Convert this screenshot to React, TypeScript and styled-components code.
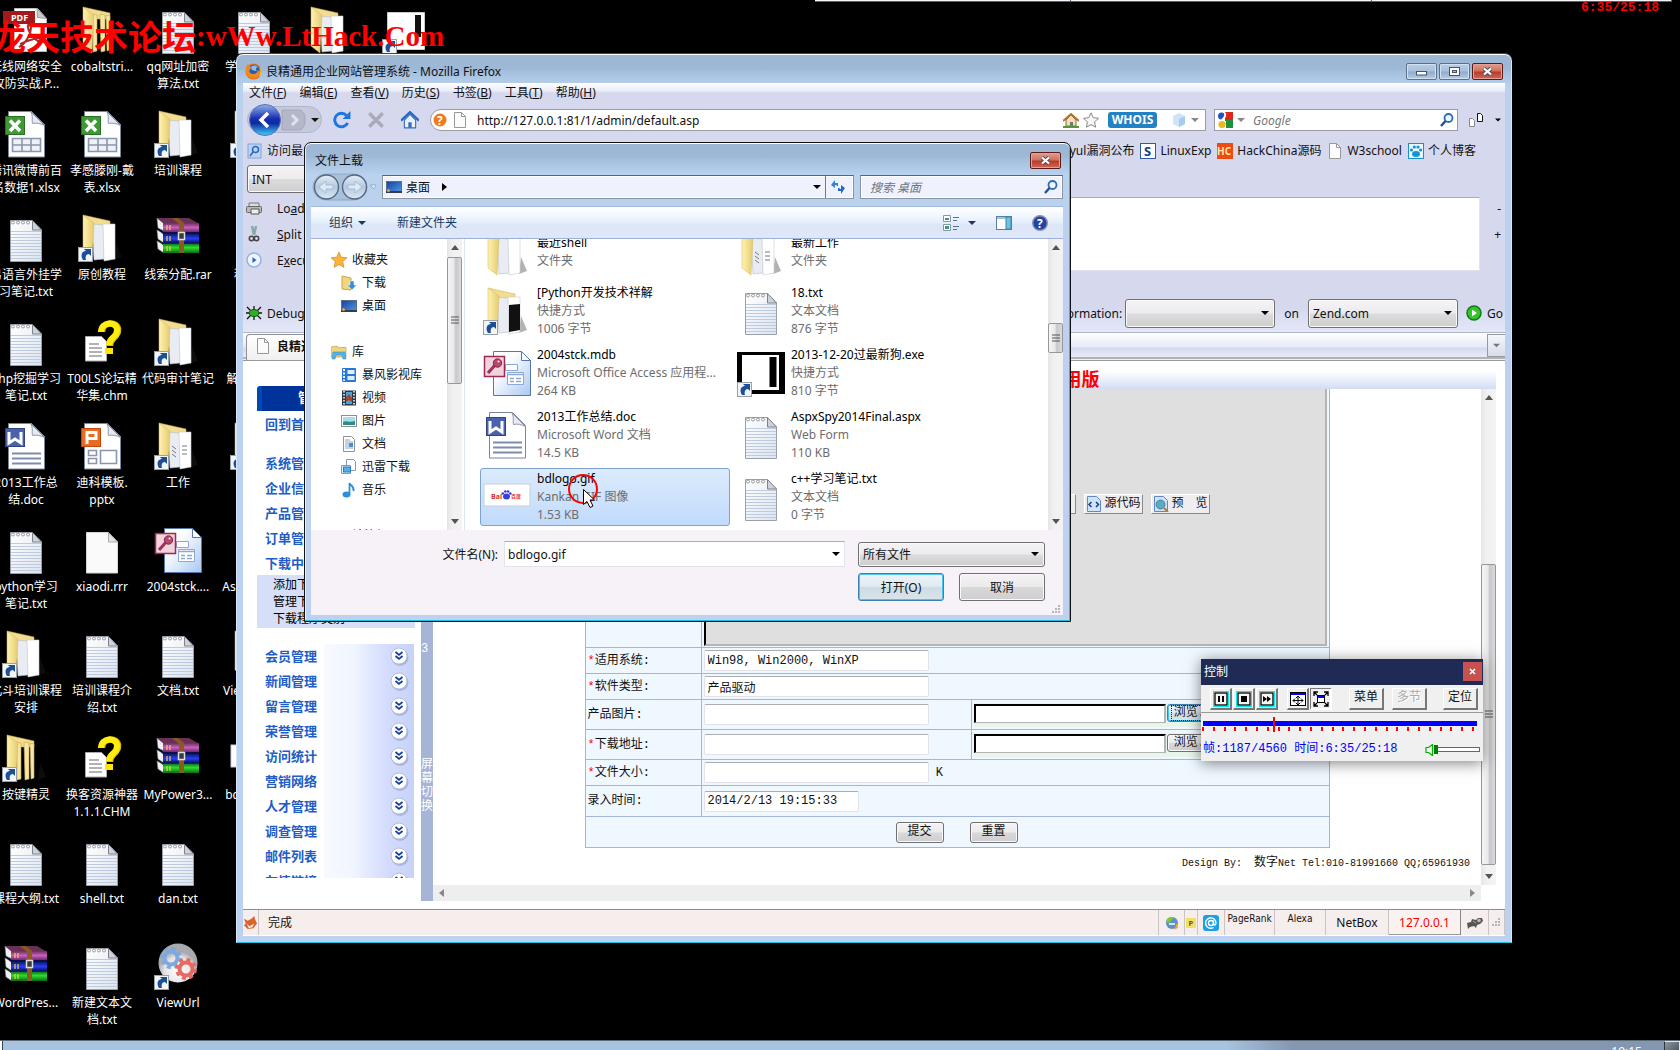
import React from 'react';
import styled, { createGlobalStyle, css } from 'styled-components';

const UI = '"Noto Sans", "Noto Sans CJK SC", sans-serif';
const MONO = '"Liberation Mono", "Noto Sans CJK SC", monospace';

const Global = createGlobalStyle`
  * { box-sizing: border-box; }
  html, body { margin: 0; height: 100%; overflow: hidden; background: #000; }
  body { font: 12px/17px ${UI}; color: #111; }
  button, input, select, textarea { font: inherit; color: inherit; margin: 0; }
  a { color: inherit; text-decoration: none; }
  svg { display: block; flex: none; }
`;

/* ---------- desktop ---------- */

const Screen = styled.main`
  position: relative;
  height: 100vh;
  overflow: hidden;
  background: #000;
  display: flex;
  flex-direction: column;
`;
const IconColumns = styled.div`
  flex: 1;
  min-height: 0;
  display: flex;
  padding-top: 5px;
  margin-left: -12px;
`;
const IconColumn = styled.div`
  width: 76px;
  flex: none;
  display: grid;
  grid-auto-rows: 104px;
`;
const Shortcut = styled.a`
  display: flex;
  flex-direction: column;
  align-items: center;
  gap: 4px;
  padding-top: 1px;
  color: #fff;
  text-align: center;
  white-space: nowrap;
  span { display: block; }
`;
const Taskbar = styled.footer`
  height: 10px;
  flex: none;
  display: flex;
  justify-content: flex-end;
  overflow: hidden;
  border-top: 1px solid #5d6a78;
  background: linear-gradient(90deg, #fff 2px, #35414d 2px, #35414d 3px, #a6c3df 3px, #a6c3df 73%, #8497b0 77%);
`;
const Clock = styled.time`
  color: #fff;
  padding: 4px 22px 0 0;
  line-height: 14px;
`;
const ShowDesktop = styled.button`
  width: 16px;
  height: 12px;
  border: 1px solid #dfe6ee;
  border-left-color: #2d3338;
  background: linear-gradient(135deg, #8b969f, #4d555c);
`;
const TopStrip = styled.div`
  position: absolute;
  top: 0;
  left: 815px;
  right: 8px;
  height: 2px;
  display: grid;
  grid-template-columns: 256px 301px 1fr;
  background: #f3f7fb;
  border-bottom: 1px solid #54616e;
  i { border-right: 1px solid #54616e; }
`;
const Watermark = styled.div`
  position: absolute;
  z-index: 5;
  top: 17px;
  left: -8px;
  display: flex;
  color: #f00;
  white-space: nowrap;
  font: bold 29px/38px "Liberation Serif", serif;
  b { font: 700 34px/38px "Noto Sans CJK SC", sans-serif; }
`;
const ScreenTimer = styled.div`
  position: absolute;
  top: 1px;
  right: 21px;
  color: #f00;
  font: bold 13px/13px ${MONO};
`;

/* ---------- aero window ---------- */

const Window = styled.section<{ $modal?: boolean }>`
  position: absolute;
  display: flex;
  flex-direction: column;
  padding: 0 6px 6px;
  border: 1px solid ${p => (p.$modal ? '#111' : '#d5e6f8')};
  border-bottom: 1px solid ${p => (p.$modal ? '#111' : '#1fc0dd')};
  border-top-color: ${p => (p.$modal ? '#111' : '#fff')};
  border-radius: 7px 7px 0 0;
  box-shadow: ${p => (p.$modal ? 'inset 0 1px #fff, inset -1px -1px #1fc0dd, inset 1px 0 #e6f1fc' : '0 -1px #444')};
  background: linear-gradient(#9cb6d3, #9eb9d7 14px, #a4bfdc 16px, #b9d2ee 32px, #bcd1ef 80px, #bdd2f0);
`;
const Browser = styled(Window)`
  top: 54px;
  left: 236px;
  right: 168px;
  bottom: 107px;
`;
const TitleBar = styled.header<{ $h: number }>`
  height: ${p => p.$h}px;
  flex: none;
  display: flex;
  align-items: center;
  gap: 2px;
  padding: 5px 2px 0;
  h1 { flex: 1; margin: 0; padding-left: 2px; font: inherit; }
`;
const CaptionButton = styled.button<{ $close?: boolean }>`
  width: 31px;
  height: 17px;
  padding: 0;
  display: grid;
  place-items: center;
  border: 1px solid ${p => (p.$close ? '#5b1a1a' : '#5d7188')};
  border-radius: 2px;
  box-shadow: inset 0 0 0 1px ${p => (p.$close ? '#e3a294' : '#d3e2f3')};
  background: ${p => (p.$close
    ? 'linear-gradient(#dd9c8f, #cf7060 48%, #b73a24 52%, #d0685a)'
    : 'linear-gradient(#b8cde6, #a8c0dc 48%, #8faccd 52%, #b4cce8)')};
`;

/* ---------- browser chrome ---------- */

const Chrome = styled.div`
  flex: none;
  background: linear-gradient(#fff, #e9ebf8 8px, #d6d9ee 10px, #d6d9ee 225px, #e3e8f8);
`;
const MenuBar = styled.nav`
  height: 20px;
  display: flex;
  align-items: center;
  gap: 13px;
  padding: 0 0 2px 6px;
`;
const NavBar = styled.div`
  height: 34px;
  display: flex;
  align-items: center;
  padding: 0 4px 0 3px;
`;
const FlatButton = styled.button`
  border: 0;
  padding: 0;
  background: none;
  display: flex;
  align-items: center;
  gap: 5px;
`;
const HistoryPill = styled.div`
  width: 78px;
  height: 32px;
  display: flex;
  align-items: center;
  margin-right: 9px;
`;
const NavButton = styled(FlatButton)`
  margin-right: 16px;
`;
const AddressBar = styled.label`
  flex: 1;
  height: 22px;
  min-width: 0;
  display: flex;
  align-items: center;
  gap: 4px;
  padding: 0 6px 0 1px;
  margin: 0 8px 0 -5px;
  border: 1px solid #9b9ba6;
  border-radius: 12px 0 0 12px;
  background: #fff;
  input { flex: 1; min-width: 0; border: 0; outline: 0; padding: 0 0 0 5px; background: none; }
`;
const Whois = styled.button`
  width: 49px;
  height: 16px;
  padding: 0;
  border: 0;
  border-radius: 3px;
  background: #2282c4;
  color: #fff;
  font: bold 12px/16px "Noto Sans", sans-serif;
  margin: 0 10px 0 5px;
`;
const SearchBar = styled(AddressBar)`
  flex: none;
  width: 244px;
  margin: 0 10px 0 0;
  border-radius: 0;
  padding: 0 2px;
  input { padding-left: 4px; }
  input::placeholder { font-style: italic; color: #777; opacity: 1; }
`;
const PageMenu = styled(FlatButton)`
  gap: 11px;
`;
const Bookmarks = styled.nav`
  height: 27px;
  display: flex;
  align-items: center;
  justify-content: flex-end;
  gap: 6px;
  padding-left: 4px;
  padding-right: 29px;
  white-space: nowrap;
  > :first-child { margin-right: auto; }
  a { display: flex; align-items: center; gap: 4px; }
`;
const HackRow = styled.div`
  display: flex;
  padding: 1px 3px 0 4px;
`;
const ButtonSelect = styled.span<{ $w: number; $h: number }>`
  flex: none;
  display: grid;
  grid-template: 1fr / 1fr;
  align-items: center;
  width: ${p => p.$w}px;
  height: ${p => p.$h}px;
  select {
    grid-area: 1 / 1;
    width: 100%;
    height: 100%;
    appearance: none;
    padding: 0 4px;
    border: 1px solid #707070;
    border-radius: 3px;
    background: linear-gradient(#f6f3f6, #ecebed 48%, #dddcdd 52%, #cfcecf);
    box-shadow: inset 0 0 0 1px #fbfafb;
  }
  svg { grid-area: 1 / 1; justify-self: end; margin-right: 6px; pointer-events: none; }
`;
const HackBody = styled.div`
  display: flex;
  align-items: flex-start;
  height: 79px;
  margin-top: 2px;
  padding-left: 3px;
`;
const HackTools = styled.div`
  width: 100px;
  display: grid;
  grid-auto-rows: 26px;
  button { gap: 15px; }
`;
const HackText = styled.textarea`
  flex: 1;
  height: 74px;
  margin-top: 2px;
  resize: none;
  border: 1px solid #e0e2ee;
  border-top-color: #a9abb8;
  background: #fff;
`;
const HackZoom = styled.div`
  width: 25px;
  display: grid;
  grid-auto-rows: 26px;
  justify-items: end;
  padding-right: 4px;
`;
const DebugBar = styled.div`
  height: 58px;
  display: flex;
  align-items: center;
  padding: 24px 2px 4px 3px;
`;
const OnLabel = styled.span`
  padding: 0 9px;
`;
const GoButton = styled(FlatButton)`
  margin-left: 8px;
`;
const Grow = styled.span`flex: 1;`;
const TabBar = styled.div`
  flex: none;
  height: 29px;
  display: flex;
  align-items: flex-end;
  justify-content: space-between;
  padding: 0 0 3px 3px;
  border-top: 1px solid #b1b5c9;
  border-bottom: 1px solid #9a9a9a;
  background: linear-gradient(#fff, #e5e8f7 14px, #d5d9ed 15px, #e9ecf9 24px, #777 25px, #f0f0f0 26px);
`;
const Tab = styled.a`
  width: 240px;
  height: 26px;
  display: flex;
  align-items: center;
  gap: 6px;
  padding: 0 0 3px 8px;
  margin-bottom: -3px;
  border: 1px solid #8f8f99;
  border-bottom: 0;
  border-radius: 4px 4px 0 0;
  background: linear-gradient(#fff, #f0f0f0);
  font-weight: bold;
`;
const TabList = styled.button`
  width: 18px;
  height: 23px;
  padding: 0;
  display: grid;
  place-items: center;
  border: 1px solid #999;
  border-right: 0;
  background: linear-gradient(#f5f6fb, #d8dcec);
`;

/* ---------- web page ---------- */

const Page = styled.div`
  flex: 1;
  min-height: 0;
  display: flex;
  padding: 0 9px 8px 0;
  background: #fff;
`;
const Sidebar = styled.aside`
  width: 178px;
  flex: none;
  height: 517px;
  overflow: hidden;
  padding: 25px 6px 0 14px;
  font: bold 13px/25px ${MONO};
  color: #215dc6;
`;
const SideTitle = styled.div`
  height: 25px;
  margin-bottom: 2px;
  border-left: 5px solid #0048b8;
  border-radius: 3px 0 0 0;
  background: #003399;
  color: #fff;
  padding-left: 36px;
`;
const SideLink = styled.a<{ $gap?: number }>`
  display: block;
  height: 25px;
  padding-left: 8px;
  margin-bottom: ${p => p.$gap ?? 0}px;
`;
const SubMenu = styled.div`
  height: 53px;
  margin-bottom: 16px;
  padding: 3px 0 0 16px;
  background: #d6dff7;
  color: #000;
  font: 12px/17px ${MONO};
  a { display: block; }
`;
const SideGroup = styled.a`
  display: flex;
  height: 25px;
  margin-right: 1px;
  padding: 1px 1px 0 8px;
  justify-content: space-between;
  background: linear-gradient(90deg, #fff 67px, #f7fbff 67px, #f0f4fe 98px, #e2e8fe 112px, #d4dcfd 130px, #c6d3f7);
  svg { margin-top: -3px; }
`;
const Switcher = styled.button`
  width: 12px;
  flex: none;
  border: 0;
  padding: 281px 0 0;
  background: #a6b4d7;
  color: #fff;
  font: 12px/14px ${MONO};
  display: flex;
  flex-direction: column;
  text-align: left;
  span { margin-top: 102px; width: 12px; }
`;
const Frame = styled.div`
  flex: 1;
  min-width: 0;
  display: grid;
  grid-template: 28px minmax(0, 1fr) 16px / minmax(0, 1fr) 15px;
`;
const FrameTitle = styled.h2`
  grid-column: 1 / -1;
  margin: 0;
  padding-top: 12px;
  text-align: center;
  white-space: nowrap;
  overflow: hidden;
  color: #f00;
  font: bold 18px/16px ${MONO};
  background: linear-gradient(#fff 10px, #f4f6fd 15px, #d2ddf4);
`;
const Document = styled.div`
  min-height: 0;
  overflow: hidden;
  display: flex;
  flex-direction: column;
  justify-content: flex-end;
  align-items: center;
  font: 12px/16px ${MONO};
`;
const FormTable = styled.table`
  width: calc(100% - 303px);
  flex: none;
  border-collapse: collapse;
  table-layout: fixed;
  background: #eff7ff;
  th, td { border: 1px solid #a6b4d7; padding: 0 2px; text-align: left; font-weight: normal; vertical-align: middle; }
  em { color: #f00; font-style: normal; }
`;
const Row = styled.tr<{ $h: number }>`height: ${p => p.$h}px;`;
const PageInput = styled.input<{ $w?: number }>`
  display: inline-block;
  vertical-align: middle;
  width: ${p => p.$w ?? 225}px;
  height: 21px;
  padding: 0 3px;
  border: 1px solid #e2e3ea;
  border-top-color: #abadb3;
  border-radius: 2px;
  background: #fff;
`;
const Editor = styled.div`
  height: 296px;
  display: flex;
  flex-direction: column;
  border: 2px solid #b4b4b4;
  border-left-color: #000;
  background: #dfdfdf;
`;
const EditorTools = styled.div`
  margin-top: 142px;
  display: flex;
  justify-content: flex-end;
  gap: 8px;
  padding-right: 115px;
`;
const EditorButton = styled.button`
  width: 59px;
  height: 20px;
  display: flex;
  align-items: center;
  justify-content: space-between;
  padding: 0 1px;
  white-space: pre;
  border: 1px solid #fff;
  border-right-color: #8a8a8a;
  border-bottom-color: #8a8a8a;
  background: #f0edf0;
`;
const FileField = styled.div`
  height: 24px;
  display: flex;
  gap: 1px;
  padding-top: 1px;
  background: #e8f5ec;
  input { width: 192px; height: 19px; border: 2px solid; border-color: #000 #b4b4b4 #b4b4b4 #000; border-width: 2px 2px 1px 2px; background: #fff; }
`;
const PageButton = styled.button<{ $w: number; $h: number; $hot?: boolean }>`
  width: ${p => p.$w}px;
  height: ${p => p.$h}px;
  padding: 0;
  border: 1px solid ${p => (p.$hot ? '#3c7fb1' : '#707070')};
  border-radius: 3px;
  box-shadow: inset 0 0 0 1px ${p => (p.$hot ? '#48c6f0' : '#fafafa')};
  background: ${p => (p.$hot
    ? 'linear-gradient(#edf4f9, #dfeaf0 48%, #cbdde6 52%, #dbe4ea)'
    : 'linear-gradient(#f5f2f5, #ebebeb 48%, #d8d8da 52%, #cfcfd1)')};
`;
const FocusText = styled.span`
  outline: 1px dotted #222;
  padding: 0 2px;
`;
const FormActions = styled.div`
  display: flex;
  justify-content: center;
  gap: 26px;
  padding-right: 1px;
`;
const PageFooter = styled.p`
  flex: none;
  align-self: stretch;
  margin: 0;
  height: 37px;
  padding: 7px 11px 0 0;
  text-align: right;
  white-space: pre;
  font: 10px/16px ${MONO};
  span { font-size: 12px; }
`;
const ScrollTrack = styled.div<{ $flat?: boolean }>`
  display: flex;
  flex-direction: ${p => (p.$flat ? 'row' : 'column')};
  justify-content: space-between;
  align-items: center;
  padding: ${p => (p.$flat ? '0 6px' : '6px 0')};
  background: ${p => (p.$flat ? '#eee' : 'linear-gradient(90deg, #e6e6e6, #f1f1f1 40%, #f4f2f4)')};
`;
const Thumb = styled.div<{ $top: number; $h: number }>`
  width: 15px;
  flex: none;
  height: ${p => p.$h}px;
  margin-top: ${p => p.$top}px;
  margin-bottom: auto;
  border: 1px solid #979797;
  border-radius: 2px;
  background: linear-gradient(90deg, #f5f5f5, #e9e9eb 45%, #c7c7cb 60%, #dcdcde);
  display: grid;
  place-items: center;
`;

/* ---------- status bar ---------- */

const StatusBar = styled.footer`
  flex: none;
  height: 27px;
  display: flex;
  align-items: stretch;
  border-top: 1px solid #8d8d8d;
  border-bottom: 1px solid #fff;
  background: #f6eded;
`;
const StatusCell = styled.span<{ $w?: number; $top?: boolean; $red?: boolean }>`
  width: ${p => (p.$w ? `${p.$w}px` : 'auto')};
  flex: ${p => (p.$w ? 'none' : '1')};
  display: flex;
  align-items: ${p => (p.$top ? 'flex-start' : 'center')};
  justify-content: ${p => (p.$w ? 'center' : 'flex-start')};
  padding-left: ${p => (p.$w ? 0 : 9)}px;
  border-right: 1px solid #cbc4c4;
  ${p => p.$top && css`font: 10px/17px "DejaVu Sans Condensed", "DejaVu Sans", sans-serif;`}
  ${p => p.$red && css`color: #f00; background: #faf1f1; border-right-color: #888; box-shadow: inset 0 -1px #999;`}
`;

/* ---------- file dialog ---------- */

const Dialog = styled(Window)`
  top: 142px;
  left: 304px;
  width: 767px;
  height: 480px;
  padding-right: 7px;
`;
const ExplorerBar = styled.div`
  height: 30px;
  flex: none;
  display: flex;
  align-items: center;
  gap: 6px;
  margin-bottom: 4px;
`;
const PathBox = styled.div<{ $w?: number }>`
  height: 24px;
  flex: ${p => (p.$w ? 'none' : '1')};
  width: ${p => (p.$w ? `${p.$w}px` : 'auto')};
  display: flex;
  align-items: center;
  gap: 4px;
  padding: 0 3px;
  border: 1px solid #8794a6;
  border-top-color: #5c6470;
  box-shadow: inset 0 0 0 1px #fff;
  background: #eff2fc;
  input { flex: 1; min-width: 0; border: 0; outline: 0; padding: 0 6px; background: none; }
  input::placeholder { font-style: italic; color: #6d7480; opacity: 1; }
`;
const PathMark = styled.span`
  padding-left: 8px;
`;
const PathSplit = styled.span`
  height: 22px;
  width: 25px;
  display: grid;
  place-items: center;
  border-left: 1px solid #6f7a88;
`;
const CommandBar = styled.div`
  height: 33px;
  flex: none;
  display: flex;
  align-items: center;
  gap: 31px;
  padding: 0 15px 0 18px;
  border-top: 1px solid #a3b8d6;
  border-bottom: 1px solid #9fb0d2;
  background: linear-gradient(#fff, #f0f6fe 10px, #e2edfb 16px, #dce6f7 18px, #dfe8f8);
  color: #1e395b;
`;
const ViewTools = styled.div`
  display: flex;
  gap: 20px;
  button { gap: 9px; }
`;
const DialogBody = styled.div`
  height: 291px;
  flex: none;
  display: flex;
  background: #fff;
`;
const Tree = styled.nav`
  width: 136px;
  flex: none;
  overflow: hidden;
  padding: 9px 0 0 20px;
`;
const TreeItem = styled.a<{ $child?: boolean; $gap?: boolean }>`
  height: 23px;
  display: flex;
  align-items: center;
  gap: 5px;
  padding-left: ${p => (p.$child ? 10 : 0)}px;
  margin-bottom: ${p => (p.$gap ? 23 : 0)}px;
  white-space: nowrap;
`;
const Files = styled.div`
  flex: 1;
  min-width: 0;
  overflow: hidden;
  display: grid;
  grid-template-columns: 250px 250px;
  grid-auto-rows: 58px;
  gap: 4px;
  align-content: end;
  padding: 0 0 4px 15px;
  margin-left: 2px;
  border-left: 1px solid #dde9f7;
`;
const FileTile = styled.a<{ $on?: boolean; $folder?: boolean }>`
  display: flex;
  align-items: center;
  gap: 6px;
  padding: ${p => (p.$folder ? 6 : 0)}px 0 0 2px;
  overflow: hidden;
  border: 1px solid ${p => (p.$on ? '#7da2ce' : 'transparent')};
  border-radius: 3px;
  background: ${p => (p.$on ? 'linear-gradient(#dcebfd, #c1dbfc)' : 'none')};
  color: #6d6d6d;
  line-height: 18px;
  white-space: nowrap;
  b { display: block; font-weight: normal; color: #000; }
  span { display: block; }
`;
const DialogFooter = styled.form`
  flex: 1;
  display: grid;
  grid-template-columns: 1fr 341px 187px;
  grid-template-rows: 26px 28px;
  row-gap: 6px;
  column-gap: 13px;
  align-items: center;
  align-content: start;
  padding: 11px 18px 0 0;
  background: #f6f2f7;
  label { justify-self: end; margin-right: -7px; }
`;
const NameBox = styled.div`
  height: 26px;
  display: flex;
  align-items: center;
  padding-right: 4px;
  border: 1px solid #e2e3ea;
  border-top-color: #abadb3;
  background: #fff;
  input { flex: 1; min-width: 0; border: 0; outline: 0; padding: 0 3px; background: none; }
`;
const DialogActions = styled.div`
  grid-column: 3;
  display: flex;
  justify-content: space-between;
`;
const GripRow = styled.div`
  grid-column: 1 / -1;
  display: flex;
  justify-content: flex-end;
  margin-right: -16px;
  margin-top: -2px;
`;

/* ---------- recorder panel ---------- */

const Recorder = styled.section`
  position: absolute;
  top: 659px;
  right: 197px;
  width: 282px;
  height: 102px;
  display: flex;
  flex-direction: column;
  background: #f0f0f0;
  box-shadow: 0 2px 14px rgba(0, 0, 0, .5);
  h2 { flex: 1; margin: 0; font: inherit; }
`;
const RecorderTitle = styled.header`
  height: 26px;
  flex: none;
  display: flex;
  align-items: center;
  padding: 0 1px 2px 3px;
  background: #202b55;
  color: #fff;
  button { width: 19px; height: 19px; padding: 0; border: 0; background: #c75050; display: grid; place-items: center; }
`;
const RecorderTools = styled.div`
  height: 28px;
  flex: none;
  display: flex;
  align-items: center;
  padding: 1px 3px 0 9px;
  border-bottom: 1px solid #999;
  font-family: ${MONO};
`;
const ToolButton = styled.button<{ $w: number; $ml?: number; $down?: boolean }>`
  width: ${p => p.$w}px;
  height: 22px;
  margin-left: ${p => p.$ml ?? 0}px;
  padding: 0;
  display: grid;
  place-items: center;
  border: solid;
  border-width: 1px 2px 2px 1px;
  border-color: ${p => (p.$down ? '#777 #fff #fff #777' : '#fff #777 #777 #fff')};
  background: #f0f0f0;
  &:disabled { color: #aaa; text-shadow: 1px 1px #fff; }
`;
const Track = styled.div`
  height: 28px;
  flex: none;
  padding: 4px 3px 0 1px;
`;
const RecorderStatus = styled.div`
  display: flex;
  justify-content: space-between;
  align-items: center;
  padding: 0 2px;
  color: #00f;
  white-space: pre;
  font: 12px/17px ${MONO};
`;
const Pointer = styled.div`
  position: absolute;
  left: 568px;
  top: 474px;
  pointer-events: none;
`;

/* ---------- icons ---------- */

const DefsSvg = styled.svg`
  position: absolute;
`;
const Defs = () => (
  <DefsSvg width="0" height="0" aria-hidden>
    <defs>
      <linearGradient id="fold" x1="0" x2="1"><stop offset="0" stopColor="#fff3b0" /><stop offset="1" stopColor="#e6cb70" /></linearGradient>
      <linearGradient id="paper" x1="0" y1="0" x2="1" y2="1"><stop offset="0" stopColor="#fff" /><stop offset="1" stopColor="#dde3ee" /></linearGradient>
      <linearGradient id="blue" x1="0" y1="0" x2="0" y2="1"><stop offset="0" stopColor="#8fb3f0" /><stop offset=".45" stopColor="#1a2fb0" /><stop offset=".6" stopColor="#0b2a9c" /><stop offset="1" stopColor="#3fd0ff" /></linearGradient>
      <linearGradient id="screen" x1="0" y1="0" x2="1" y2="1"><stop offset="0" stopColor="#173f9e" /><stop offset="1" stopColor="#4f9be6" /></linearGradient>
      <linearGradient id="glass" x1="0" y1="0" x2="0" y2="1"><stop offset="0" stopColor="#e4eef8" /><stop offset=".5" stopColor="#b4c8df" /><stop offset="1" stopColor="#dbe8f6" /></linearGradient>
      <linearGradient id="purple" x1="0" y1="0" x2="0" y2="1"><stop offset="0" stopColor="#6b2d5b" /><stop offset=".5" stopColor="#c95fc0" /><stop offset="1" stopColor="#6e2a66" /></linearGradient>
      <linearGradient id="navy" x1="0" y1="0" x2="0" y2="1"><stop offset="0" stopColor="#10186e" /><stop offset=".5" stopColor="#2840f0" /><stop offset="1" stopColor="#0a1060" /></linearGradient>
      <linearGradient id="green" x1="0" y1="0" x2="0" y2="1"><stop offset="0" stopColor="#0e7a20" /><stop offset=".4" stopColor="#2be02b" /><stop offset="1" stopColor="#0a6a14" /></linearGradient>
      <linearGradient id="access" x1="0" y1="0" x2="1" y2="1"><stop offset=".3" stopColor="#fff" /><stop offset="1" stopColor="#a9c8f2" /></linearGradient>
      <radialGradient id="ball" cx=".5" cy=".7"><stop offset="0" stopColor="#fff" /><stop offset=".7" stopColor="#e4e4e8" /><stop offset="1" stopColor="#a9a9b0" /></radialGradient>
    </defs>
  </DefsSvg>
);

const Box = ({ children }: { children: React.ReactNode }) => (
  <svg width="48" height="48" viewBox="0 0 48 48" aria-hidden>{children}</svg>
);
const Arrow = () => (
  <g>
    <rect x=".5" y="33.5" width="14" height="14" fill="#f2f5f8" stroke="#9aa0a8" />
    <path d="M5 46c-3-5-1-9 3-9L6 35h7v7l-2-2c-3 0-4 3-3 6z" fill="#1d4f96" />
  </g>
);
const Notepad = () => (
  <Box>
    <path d="M8.500 6.500h22l9 9.500v31.500h-31z" fill="url(#paper)" stroke="#9aa0ab" />
    {[17, 20, 23, 26, 29, 32, 35, 38, 41, 44].map(y => <path key={y} d={`M9 ${y}.500h30`} stroke="#bccbe0" />)}
    {[11, 16, 21, 26].map(x => <circle key={x} cx={x} cy="8.500" r="1.500" fill="none" stroke="#888" strokeWidth=".8" />)}
    <path d="M30.500 6.500l9 9.500h-9z" fill="#cfd2d8" stroke="#7d828c" />
  </Box>
);
const Blank = () => (
  <Box><path d="M8.500 6.500h22l9 9.500v31h-31z" fill="#fafafa" stroke="#d5d5d5" /><path d="M30.500 6.500v9.500h9z" fill="#e4e4e4" stroke="#aaa" /></Box>
);
type FolderKind = 'plain' | 'full' | 'dark' | 'text';
const Folder = ({ link, kind = 'plain' }: { link?: boolean; kind?: FolderKind }) => (
  <Box>
    <path d="M36 46l8-3-6-14z" fill="#222" opacity=".35" />
    <path d="M5 1l27 6v6l-16 0z" fill="#f2dd8e" stroke="#c9ac50" strokeWidth=".5" />
    {kind === 'full'
      ? <path d="M15 8l4 1v36l-4 1zM22 8l5 1v36l-4 1zM28 9l4 1v34l-3 1z" fill="#f6e7a6" stroke="#c2a653" strokeWidth=".6" />
      : <><path d="M14 10l12 1v34l-10 1z" fill="#e9edf3" stroke="#b7bcc6" strokeWidth=".6" /><path d="M25 10h12v35l-11 2z" fill="#fff" stroke="#c6c9d0" strokeWidth=".6" /></>}
    {kind === 'dark' && <path d="M26 18l11-1v26l-11 2z" fill="#111" />}
    {kind === 'text' && <path d="M18 24l4 3M18 28l4 3M18 32l4 3M28 24h5M28 28h5M28 32h5" stroke="#777" />}
    <path d="M5 1l11 8-2 38-9-7z" fill="url(#fold)" stroke="#d2b65c" strokeWidth=".5" />
    {link && <Arrow />}
  </Box>
);
const OfficeFile = ({ c, d, kind }: { c: string; d: string; kind: 'x' | 'w' | 'p' }) => (
  <Box>
    <path d="M6.500 1.500h23l13 13v32.500h-36z" fill="#fff" stroke="#7b8599" />
    <path d="M28.500 1.500c3 4 1 9 2 12 4-1 8 0 12 2z" fill="#e6e9ef" stroke="#8d96a8" />
    <rect x="3.500" y="6.500" width="19" height="18" fill={c} stroke={d} />
    {kind === 'x' && <><path d="M8 10.500l10 10.500M18 10.500L8 21" stroke="#fff" strokeWidth="3.500" /><path d="M10.500 28.500h28v13h-28zM10.500 35h28M20 28.500v13M29 28.500v13" fill="#eef1f6" stroke="#8b95ad" strokeWidth="1.600" /></>}
    {kind === 'w' && <><path d="M7 10v11l6-4 6 4V10" fill="none" stroke="#fff" strokeWidth="3" /><path d="M10 31.500h29M10 36.500h29M10 41.500h29" stroke="#7f8bab" strokeWidth="2" /></>}
    {kind === 'p' && <><path d="M9 22V10.500h9v6H9" fill="none" stroke="#fff" strokeWidth="3" /><path d="M10.500 28.500h8v5h-8zM10.500 36.500h8v5h-8zM22.500 28.500h16v13h-16z" fill="none" stroke="#8b95ad" strokeWidth="1.600" /></>}
  </Box>
);
const Excel = () => <OfficeFile c="#3f9a34" d="#2b6e25" kind="x" />;
const Word = () => <OfficeFile c="#4a62ad" d="#33447c" kind="w" />;
const Slides = () => <OfficeFile c="#ea6a1f" d="#c0480e" kind="p" />;
const Pdf = () => (
  <Box>
    <path d="M12.500 2.500h23l9 10v33h-32z" fill="#fff" stroke="#bbb" />
    <path d="M35 2.500l9.500 10-9-1z" fill="#ccc" stroke="#999" />
    <path d="M17 41c6-3 12-12 12-20 0-4-4-3-3 1 2 8 9 14 14 14 4 0 3-4-1-4-8 0-16 4-21 6" fill="none" stroke="#b12a2a" strokeWidth="2" />
    <rect x="1" y="5" width="32" height="13" fill="#a3191c" />
    <text x="9" y="15" fill="#fff" fontSize="9" fontWeight="bold" fontFamily="Noto Sans">PDF</text>
  </Box>
);
const Chm = () => (
  <Box>
    <path d="M7.500 18.500h16l5 5v19.500h-21z" fill="#fff" stroke="#aaa" />
    <path d="M11 26h10M11 30h13M11 34h13M11 38h13" stroke="#999" strokeWidth="1.500" />
    <path d="M24 14c0-11 16-11 16-2 0 8-8 7-8 16" fill="none" stroke="#d9bb00" strokeWidth="6.500" />
    <path d="M23 14c0-11 16-11 16-2 0 8-8 7-8 15" fill="none" stroke="#ffec10" strokeWidth="6" />
    <rect x="27" y="30" width="8" height="6" fill="#ffe600" />
  </Box>
);
const Rar = () => (
  <Box>
    <path d="M3 4l7 5v8l-6-3zM3 16l7 4v9l-6-4zM3 27l7 4v8l-6-4z" fill="#f1f1f5" stroke="#889" strokeWidth=".6" />
    <path d="M3 4h32l10 6H10z" fill="#6a3157" />
    <rect x="9" y="9" width="36" height="9" fill="url(#purple)" />
    <path d="M4 15l6 3h35v3H10z" fill="#0b0f45" />
    <rect x="9" y="20" width="36" height="9" fill="url(#navy)" />
    <path d="M4 26l6 3h35v3H10z" fill="#083a10" />
    <rect x="9" y="30" width="36" height="9" fill="url(#green)" />
    <path d="M13 11v5M16 11v5M13 22v5M16 22v5M13 32v5M16 32v5" stroke="#f0d048" strokeWidth="1.200" />
    <path d="M18 4h6l6 5v30h-5V10z" fill="#8a5a1e" />
    <rect x="24.500" y="18.500" width="6" height="7" fill="#3b3b3b" stroke="#ddd" strokeWidth="1.500" />
  </Box>
);
const Access = () => (
  <Box>
    <path d="M10.500 2.500h28l9 9v35h-37z" fill="url(#access)" stroke="#5677ae" />
    <path d="M38.500 2.500v9h9z" fill="#fff" stroke="#5677ae" />
    <path d="M22.500 15.500h12v6h-12zM24.500 23.500h16v12h-16z" fill="#fff" stroke="#8ba8d6" /><path d="M25 25.500h15M27 29.500h4M27 32.500h4M33 29.500h5M33 32.500h5" stroke="#8ba8d6" strokeWidth="1.500" />
    <rect x="1.500" y="7.500" width="20" height="20" fill="#f0d3dc" stroke="#9c2b52" strokeWidth="1.500" />
    <path d="M5 24l8-9" stroke="#a03058" strokeWidth="3" /><circle cx="14.500" cy="14" r="4.200" fill="#b64a6e" stroke="#8c1f44" /><circle cx="15.500" cy="12.500" r="1" fill="#fff" />
  </Box>
);
const Exe = ({ wide }: { wide?: boolean }) => (
  <Box>
    {wide ? <><rect y="3" width="48" height="42" fill="#000" /><path d="M5 6h37v35H5z" fill="#fff" /><rect x="32.500" y="8" width="7" height="30" fill="#000" /></>
      : <><path d="M5.500 6.500h37v37h-37z" fill="#fff" stroke="#ccc" /><rect x="33" y="9" width="6" height="22" fill="#111" /></>}
    <Arrow />
  </Box>
);
const Gears = () => (
  <Box>
    <circle cx="24" cy="21" r="19.500" fill="url(#ball)" />
    <circle cx="17" cy="16" r="6.500" fill="none" stroke="#7ea9de" strokeWidth="4" /><circle cx="17" cy="16" r="9.500" fill="none" stroke="#7ea9de" strokeWidth="3" strokeDasharray="4 3.500" />
    <circle cx="32" cy="27" r="6.500" fill="none" stroke="#e56a62" strokeWidth="4" /><circle cx="32" cy="27" r="9.500" fill="none" stroke="#e56a62" strokeWidth="3" strokeDasharray="4 3.500" />
    <Arrow />
  </Box>
);
const BaiduThumb = () => (
  <Box>
    <rect x="1" y="11" width="46" height="22" fill="#fff" stroke="#c8cdd6" />
    <text x="8" y="26" fontSize="7" fontWeight="bold" fill="#e02b2b" fontFamily="Open Sans">Bai</text>
    <text x="28" y="25" fontSize="5" fontWeight="bold" fill="#e02b2b" fontFamily="Noto Sans CJK SC">百度</text>
    <g fill="#3b3fd8"><ellipse cx="23.500" cy="23.500" rx="3.500" ry="3" /><circle cx="19.800" cy="20.500" r="1.300" /><circle cx="22.300" cy="18.500" r="1.300" /><circle cx="25" cy="18.500" r="1.300" /><circle cx="27.300" cy="20.500" r="1.300" /></g>
  </Box>
);
const Caret = ({ c = '#000', s = 8 }: { c?: string; s?: number }) => (
  <svg width={s} height={s} viewBox="0 0 8 8" aria-hidden><path d="M0 2h8L4 6z" fill={c} /></svg>
);
const CaretUp = () => <svg width="8" height="5" viewBox="0 0 8 5" aria-hidden><path d="M0 5h8L4 0z" fill="#555" /></svg>;
const CaretDown = () => <svg width="8" height="5" viewBox="0 0 8 5" aria-hidden><path d="M0 0h8L4 5z" fill="#555" /></svg>;
const Ico = ({ s = 16, children }: { s?: number; children: React.ReactNode }) => (
  <svg width={s} height={s} viewBox="0 0 16 16" aria-hidden>{children}</svg>
);
const CloseX = () => (
  <svg width="11" height="9" viewBox="0 0 11 9" aria-hidden><path d="M2 1.500l7 6M9 1.500l-7 6" stroke="#4b4b5b" strokeWidth="4" /><path d="M2 1.500l7 6M9 1.500l-7 6" stroke="#fff" strokeWidth="2.300" /></svg>
);
const PageIco = () => <Ico><path d="M2.500.5h7l4 4v11h-11z" fill="#fbfbfb" stroke="#999" /><path d="M9.500.5v4h4" fill="none" stroke="#999" /></Ico>;
const Firefox = () => (
  <Ico s={17}><circle cx="8" cy="8" r="7.500" fill="#e8731a" /><circle cx="8.500" cy="6.500" r="5" fill="#2b5fae" /><path d="M6 3c2-1 5-1 6 1-2 0-2 2-1 3-2 1-4-1-5-1z" fill="#8cc0ec" /><path d="M.7 5C1 2 3 1 3 1c0 2 1 2.500 3 3-1 2-2 2-2 4 1 3 6 3 7 1 1 0 1-1 0-2 3 0 4 3 2 5-4 5-13 2-12.300-7z" fill="#f08a1c" /><path d="M14 3c2 3 2 8-1 10 2-4 2-7 1-10z" fill="#ffd23e" /></Ico>
);
const Magnifier = () => <Ico><circle cx="9.500" cy="6" r="4" fill="#eef6ff" stroke="#2d6cb5" strokeWidth="1.800" /><path d="M6.500 9L2 14" stroke="#1f4f9a" strokeWidth="2.400" /></Ico>;
const Monitor = () => <Ico><rect x=".5" y="2.500" width="15" height="11" fill="url(#screen)" stroke="#5c6d85" /><path d="M0 13h16" stroke="#333c48" strokeWidth="2" /><circle cx="2.500" cy="11.500" r="1.500" fill="#f0a030" /></Ico>;
const Chevrons = () => (
  <svg width="28" height="28" viewBox="0 0 28 28" aria-hidden>
    <circle cx="15" cy="15.500" r="8.500" fill="#8a94c2" opacity=".5" /><circle cx="14" cy="14" r="8" fill="#fff" stroke="#b4bde0" />
    <path d="M10.500 10l3.500 3 3.500-3M10.500 14l3.500 3 3.500-3" fill="none" stroke="#123d9c" strokeWidth="1.700" />
  </svg>
);
const Grip = () => <svg width="9" height="9" viewBox="0 0 9 9" aria-hidden><path d="M6 0h2v2H6zM3 3h2v2H3zM6 3h2v2H6zM0 6h2v2H0zM3 6h2v2H3zM6 6h2v2H6z" fill="#b8b4ba" /></svg>;
const ThumbLines = () => <svg width="8" height="9" viewBox="0 0 8 9" aria-hidden><path d="M0 1h8M0 4h8M0 7h8" stroke="#555" /></svg>;

/* ---------- data ---------- */

type Item = [React.ReactNode, string[]] | null;
const desktop: Item[][] = [
  [
    [<Pdf />, ['无线网络安全', '攻防实战.P...']],
    [<Excel />, ['腾讯微博前百', '名数据1.xlsx']],
    [<Notepad />, ['易语言外挂学', '习笔记.txt']],
    [<Notepad />, ['php挖掘学习', '笔记.txt']],
    [<Word />, ['2013工作总', '结.doc']],
    [<Notepad />, ['python学习', '笔记.txt']],
    [<Folder link />, ['北斗培训课程', '安排']],
    [<Folder link kind="full" />, ['按键精灵']],
    [<Notepad />, ['课程大纲.txt']],
    [<Rar />, ['WordPres...']],
  ],
  [
    [<Folder kind="full" />, ['cobaltstri...']],
    [<Excel />, ['孝感滕刚-戴', '表.xlsx']],
    [<Folder link />, ['原创教程']],
    [<Chm />, ['T00LS论坛精', '华集.chm']],
    [<Slides />, ['迪科模板.', 'pptx']],
    [<Blank />, ['xiaodi.rrr']],
    [<Notepad />, ['培训课程介', '绍.txt']],
    [<Chm />, ['换客资源神器', '1.1.1.CHM']],
    [<Notepad />, ['shell.txt']],
    [<Notepad />, ['新建文本文', '档.txt']],
  ],
  [
    [<Notepad />, ['qq网址加密', '算法.txt']],
    [<Folder link />, ['培训课程']],
    [<Rar />, ['线索分配.rar']],
    [<Folder link />, ['代码审计笔记']],
    [<Folder link kind="text" />, ['工作']],
    [<Access />, ['2004stck....']],
    [<Notepad />, ['文档.txt']],
    [<Rar />, ['MyPower3...']],
    [<Notepad />, ['dan.txt']],
    [<Gears />, ['ViewUrl']],
  ],
  [
    [<Notepad />, ['学习笔记1.']],
    [<Folder link />, []],
    [null, ['程序2.c']],
    [null, ['解压密码2']],
    [<Folder link />, ['台式机']],
    [null, ['AspxSpy2...']],
    [<Folder />, ['ViewState1']],
    [<BaiduThumb />, ['bdlogo.gif']],
  ],
  [[<Folder />, []]],
  [[<Exe />, []]],
];

const files: [React.ReactNode, string, string, string?][] = [
  [<Folder />, '最近shell', '文件夹'],
  [<Folder kind="text" />, '最新工作', '文件夹'],
  [<Folder link kind="dark" />, '[Python开发技术祥解', '快捷方式', '1006 字节'],
  [<Notepad />, '18.txt', '文本文档', '876 字节'],
  [<Access />, '2004stck.mdb', 'Microsoft Office Access 应用程...', '264 KB'],
  [<Exe wide />, '2013-12-20过最新狗.exe', '快捷方式', '810 字节'],
  [<Word />, '2013工作总结.doc', 'Microsoft Word 文档', '14.5 KB'],
  [<Notepad />, 'AspxSpy2014Final.aspx', 'Web Form', '110 KB'],
  [<BaiduThumb />, 'bdlogo.gif', 'Kankan GIF 图像', '1.53 KB'],
  [<Notepad />, 'c++学习笔记.txt', '文本文档', '0 字节'],
];

const tree: [React.ReactNode, string, boolean, boolean][] = [
  [<Ico><path d="M8 0l2.300 5.300 5.700.5-4.300 3.800 1.300 5.900L8 12.400l-5 3.100 1.300-5.900L0 5.800l5.700-.5z" fill="#f9b43a" stroke="#d9822b" strokeWidth=".7" /></Ico>, '收藏夹', false, false],
  [<Ico><path d="M1 1l9 2v12l-9-1z" fill="#f0d682" stroke="#c9a648" /><path d="M9 6h4v4h2.500L11 15l-4.500-5H9z" fill="#2f8fe0" stroke="#fff" strokeWidth=".5" /></Ico>, '下载', true, false],
  [<Monitor />, '桌面', true, true],
  [<Ico><path d="M0 3l6-1 1 1.500h8V13H0z" fill="#efd57c" stroke="#c2a24a" strokeWidth=".7" /><path d="M2 8h12l1 7h-3l-1-4H5l-1 4H1z" fill="#55b3e6" stroke="#2f87c2" strokeWidth=".5" /></Ico>, '库', false, false],
  [<Ico><rect x="1" y="1" width="14" height="14" rx="1" fill="#2c74d8" /><path d="M3 2v12" stroke="#dff" strokeWidth="2" strokeDasharray="2 1.500" /><path d="M6.500 3h7v4h-7zM6.500 9h7v4h-7z" fill="#d9f0ff" /></Ico>, '暴风影视库', true, false],
  [<Ico><rect x="1" y=".5" width="14" height="15" fill="#2d3a44" /><path d="M3 1v14M13 1v14" stroke="#fff" strokeWidth="1.500" strokeDasharray="1.500 1.500" /><path d="M5 2h6v12H5z" fill="#4aa3dc" /><path d="M5 7l3-3 3 4v4l-3-2-3 2z" fill="#a3452a" /></Ico>, '视频', true, false],
  [<Ico><rect x=".5" y="2.500" width="15" height="11" fill="#fff" stroke="#8a8f99" /><rect x="2" y="4" width="12" height="8" fill="#a8dcf6" /><path d="M2 9c3-2 6 1 12-1v4H2z" fill="#2d8f78" /></Ico>, '图片', true, false],
  [<Ico><path d="M2.500.5h8l3 3v12h-11z" fill="#fff" stroke="#8a93a3" /><path d="M4 4h5M4 6h8M4 8h4M4 10h4M4 12h8" stroke="#91a4bd" /><rect x="8" y="7" width="4" height="4" fill="#4a90d9" /></Ico>, '文档', true, false],
  [<Ico><path d="M5.500.5h7l2 2v9h-9z" fill="#fff" stroke="#7f9bbd" /><path d="M.5 6.500h9v8h-9z" fill="#e5f3fd" stroke="#7f9bbd" /><rect x="2.500" y="8" width="7" height="5" fill="#57ade6" stroke="#2d7cc0" /></Ico>, '迅雷下载', true, false],
  [<Ico><ellipse cx="5.500" cy="12.500" rx="4" ry="3" fill="#2a8fdc" /><path d="M8.500 12V1c1 3 5 3 4 8" fill="none" stroke="#2a8fdc" strokeWidth="1.800" /></Ico>, '音乐', true, true],
  [<Ico><rect x="1" y="3" width="14" height="10" fill="#b8b8b8" stroke="#777" /></Ico>, '计算机', false, false],
];

const menus = [['文件', 'F'], ['编辑', 'E'], ['查看', 'V'], ['历史', 'S'], ['书签', 'B'], ['工具', 'T'], ['帮助', 'H']];
const groups = ['会员管理', '新闻管理', '留言管理', '荣誉管理', '访问统计', '营销网络', '人才管理', '调查管理', '邮件列表', '友情链接'];

const Req = ({ id, children }: { id: string; children: React.ReactNode }) => <label htmlFor={id}><em>*</em>{children}</label>;

/* ---------- parts ---------- */

const BrowserChrome = () => (
  <Chrome>
    <MenuBar>{menus.map(([t, k]) => <a href="#" key={k}>{t}(<u>{k}</u>)</a>)}</MenuBar>
    <NavBar>
      <HistoryPill>
        <svg width="78" height="32" viewBox="0 0 78 32" aria-hidden>
          <rect x="1.500" y="2.500" width="74" height="26" rx="13" fill="#c5c9dc" stroke="#b0b4c8" />
          <path d="M36 6h17q6 0 6 10t-6 10H36z" fill="#b4b7c8" stroke="#a4a8bb" />
          <path d="M46 11l5 5-5 5" fill="none" stroke="#dfe1ec" strokeWidth="3" />
          <circle cx="19" cy="16" r="15.500" fill="url(#blue)" stroke="#5b6eb8" />
          <path d="M22 9l-7 7 7 7" fill="none" stroke="#fff" strokeWidth="3.500" />
          <path d="M65 14h8l-4 4z" fill="#111" />
        </svg>
      </HistoryPill>
      <NavButton aria-label="刷新"><Ico s={18}><path d="M13 10.500A6 6 0 1 1 12 4" fill="none" stroke="#1e74e0" strokeWidth="2.600" /><path d="M15.500 0v7h-7z" fill="#1e74e0" /></Ico></NavButton>
      <NavButton aria-label="停止"><Ico s={18}><path d="M2 2l12 12M14 2L2 14" stroke="#a9abb8" strokeWidth="3" /></Ico></NavButton>
      <NavButton aria-label="主页"><Ico s={18}><path d="M3 8v7h10V8L8 3z" fill="#e8f2fd" stroke="#3b6dbf" /><path d="M0 8.500L8 1l8 7.500" fill="none" stroke="#2c66c4" strokeWidth="2" /><path d="M6.500 15v-5h3v5z" fill="#3b6dbf" /></Ico></NavButton>
      <AddressBar>
        <Ico><circle cx="8" cy="8" r="6.500" fill="#ef7a1e" /><text x="5" y="12.500" fontSize="12" fontWeight="bold" fill="#fff" fontFamily="Open Sans">?</text></Ico>
        <PageIco />
        <input aria-label="地址" defaultValue="http://127.0.0.1:81/1/admin/default.asp" />
        <Ico><path d="M3 8v6h10V8L8 3z" fill="#f6dfb4" stroke="#8a6a3a" /><path d="M0 9l8-7 8 7" fill="none" stroke="#b07430" strokeWidth="2" /><path d="M0 15h16" stroke="#4f9a3a" strokeWidth="2" /><path d="M7 10h3v4H7z" fill="#777" /></Ico>
        <Ico><path d="M8 .8l2.200 4.900 5.300.6-3.900 3.600 1 5.300L8 12.600l-4.600 2.600 1-5.300L.5 6.300l5.300-.6z" fill="#f7f7f7" stroke="#888" /></Ico>
        <Whois>WHOIS</Whois>
        <Ico><path d="M2 4l6-3 6 3v8l-6 3-6-3z" fill="#cfe4f8" /><path d="M8 7l6-3v8l-6 3z" fill="#a9cbed" /></Ico>
        <Caret c="#888" />
      </AddressBar>
      <SearchBar>
        <Ico><rect width="16" height="16" fill="#fff" /><path d="M8 0h8v9H8z" fill="#e0251b" /><path d="M9 8h7v8H9z" fill="#1f8f3a" /><circle cx="4.500" cy="4" r="3.500" fill="#2155c4" /><circle cx="5" cy="12.500" r="3.500" fill="#f0b41c" /><path d="M5 8q4-3 3-7" stroke="#fff" strokeWidth="2" fill="none" /></Ico>
        <Caret c="#888" />
        <input aria-label="搜索" placeholder="Google" />
        <Magnifier />
      </SearchBar>
      <PageMenu aria-label="页面"><Ico><path d="M1.500 6.500h3l2 2v6h-5z" fill="#fff" stroke="#888" /><path d="M9.500 1.500h3l2 2v6h-5z" fill="#fff" stroke="#111" /></Ico><Caret s={6} /></PageMenu>
    </NavBar>
    <Bookmarks>
      <a href="#"><Ico><rect x="1" y="1" width="13" height="14" fill="#b9d5f5" stroke="#7ea6d8" /><circle cx="8.500" cy="6.500" r="3" fill="none" stroke="#3865b0" strokeWidth="1.500" /><path d="M6 9l-3 4" stroke="#3865b0" strokeWidth="1.500" /></Ico>访问最多</a>
      <a href="#">Wooyul漏洞公布</a>
      <a href="#"><Ico><rect x=".5" y=".5" width="15" height="15" fill="#fff" stroke="#2d5aa8" /><text x="4" y="13" fontSize="13" fontWeight="bold" fill="#123c8c" fontFamily="Open Sans">S</text></Ico>LinuxExp</a>
      <a href="#"><Ico><rect width="16" height="16" fill="#ee4a12" /><text x="0" y="12" fontSize="10" fontWeight="bold" fill="#ffe9a0" fontFamily="Noto Sans">HC</text></Ico>HackChina源码</a>
      <a href="#"><PageIco />W3school</a>
      <a href="#"><Ico><rect x=".5" y=".5" width="15" height="15" fill="#e9f7fd" stroke="#1c8fc4" /><g fill="#1495d0"><ellipse cx="8" cy="11" rx="4" ry="3" /><circle cx="3.500" cy="7" r="1.600" /><circle cx="6.300" cy="4" r="1.600" /><circle cx="10" cy="4" r="1.600" /><circle cx="12.600" cy="7" r="1.600" /></g></Ico>个人博客</a>
    </Bookmarks>
    <HackRow><ButtonSelect $w={92} $h={28}><select aria-label="类型"><option>INT</option></select><Caret /></ButtonSelect></HackRow>
    <HackBody>
      <HackTools>
        <FlatButton><Ico><path d="M3 3h10v4H3z" fill="#ddd" stroke="#777" /><rect x=".5" y="6.500" width="15" height="6" rx="1" fill="#bbb" stroke="#666" /><path d="M5 9h8v5H5z" fill="#eee" stroke="#555" /></Ico><span>Lo<u>a</u>d URL</span></FlatButton>
        <FlatButton><Ico><path d="M6 0l2 9M10 0L8 9" stroke="#8aa" strokeWidth="2.500" /><circle cx="5.500" cy="12.500" r="2.200" fill="none" stroke="#444" strokeWidth="1.500" /><circle cx="10.500" cy="12.500" r="2.200" fill="none" stroke="#444" strokeWidth="1.500" /></Ico><span><u>S</u>plit URL</span></FlatButton>
        <FlatButton><Ico><circle cx="8" cy="8" r="7" fill="#eef5ff" stroke="#8fb4e4" strokeWidth="1.500" /><path d="M6.500 5l4 3-4 3z" fill="#2c66c4" /></Ico><span>E<u>x</u>ecute</span></FlatButton>
      </HackTools>
      <HackText aria-label="Hackbar" />
      <HackZoom><FlatButton>-</FlatButton><FlatButton>+</FlatButton></HackZoom>
    </HackBody>
    <DebugBar>
      <FlatButton><Ico><path d="M1 2l4 4M15 2l-4 4M0 8h16M1 14l4-4M15 14l-4-4M8 1v4M8 11v4" stroke="#111" strokeWidth="1.300" /><ellipse cx="8" cy="8" rx="5" ry="3.500" fill="#2fae1f" stroke="#0c5a08" /></Ico><span>Debug</span></FlatButton>
      <Grow />
      <label htmlFor="info">Search information:&nbsp;</label>
      <ButtonSelect $w={150} $h={29}><select id="info"><option> </option></select><Caret /></ButtonSelect>
      <OnLabel>on</OnLabel>
      <ButtonSelect $w={150} $h={29}><select aria-label="site"><option>Zend.com</option></select><Caret /></ButtonSelect>
      <GoButton><Ico><circle cx="8" cy="8" r="7" fill="#35c42c" stroke="#14781a" strokeWidth="1.500" /><path d="M6 4.500l5 3.500-5 3.500z" fill="#fff" /></Ico>Go</GoButton>
    </DebugBar>
  </Chrome>
);

const FormPage = () => (
  <Page>
    <Sidebar>
      <SideTitle>管理菜单</SideTitle>
      <SideLink href="#" $gap={14}>回到首页</SideLink>
      {['系统管理', '企业信息', '产品管理', '订单管理', '下载中心'].map((t, i) => <SideLink href="#" key={t} $gap={i === 4 ? -2 : 0}>{t}</SideLink>)}
      <SubMenu><a href="#">添加下载程序</a><a href="#">管理下载程序</a><a href="#">下载程序类别</a></SubMenu>
      {groups.map(g => <SideGroup href="#" key={g}>{g}<Chevrons /></SideGroup>)}
    </Sidebar>
    <Switcher>3<span>屏幕切换</span></Switcher>
    <Frame>
      <FrameTitle>良精通用企业网站管理系统商用版</FrameTitle>
      <Document>
        <FormTable>
          <colgroup><col style={{ width: 116 }} /><col style={{ width: 270 }} /><col /></colgroup>
          <tbody>
            <Row $h={300}><th /><td colSpan={2}>
              <Editor><EditorTools>
                <EditorButton>设计</EditorButton>
                <EditorButton><Ico><path d="M1.500.5h9l4 4v11h-13z" fill="#cfe3fb" stroke="#5b8ac6" /><path d="M5.500 6L3 8.500 5.500 11M10 6l2.500 2.500L10 11" fill="none" stroke="#123c8c" strokeWidth="1.500" /></Ico>源代码</EditorButton>
                <EditorButton><Ico><path d="M1.500.5h9l4 4v11h-13z" fill="#cfe3fb" stroke="#5b8ac6" /><circle cx="7.500" cy="8.500" r="4.500" fill="#4fb0c8" stroke="#678" /><path d="M11 12l4 4" stroke="#c07830" strokeWidth="2" /></Ico>预　览</EditorButton>
              </EditorTools></Editor>
            </td></Row>
            <Row $h={26}><th><Req id="os">适用系统:</Req></th><td colSpan={2}><PageInput id="os" defaultValue="Win98, Win2000, WinXP" /></td></Row>
            <Row $h={26}><th><Req id="kind">软件类型:</Req></th><td colSpan={2}><PageInput id="kind" defaultValue="产品驱动" /></td></Row>
            <Row $h={30}><th><label htmlFor="img">产品图片:</label></th><td><PageInput id="img" /></td><td><FileField><input aria-label="图片文件" /><PageButton $w={60} $h={18} $hot><FocusText>浏览...</FocusText></PageButton></FileField></td></Row>
            <Row $h={30}><th><Req id="url">下载地址:</Req></th><td><PageInput id="url" /></td><td><FileField><input aria-label="下载文件" /><PageButton $w={60} $h={18}>浏览...</PageButton></FileField></td></Row>
            <Row $h={26}><th><Req id="size">文件大小:</Req></th><td colSpan={2}><PageInput id="size" /> K</td></Row>
            <Row $h={31}><th><label htmlFor="time">录入时间:</label></th><td colSpan={2}><PageInput id="time" $w={155} defaultValue="2014/2/13 19:15:33" /></td></Row>
            <Row $h={31}><td colSpan={3}><FormActions><PageButton $w={48} $h={21}>提交</PageButton><PageButton $w={48} $h={21}>重置</PageButton></FormActions></td></Row>
          </tbody>
        </FormTable>
        <PageFooter>Design By:  <span>数字</span>Net Tel:010-81991660 QQ;65961930</PageFooter>
      </Document>
      <ScrollTrack><CaretUp /><Thumb $top={164} $h={301}><ThumbLines /></Thumb><CaretDown /></ScrollTrack>
      <ScrollTrack $flat>
        <svg width="5" height="8" viewBox="0 0 5 8" aria-hidden><path d="M5 0v8L0 4z" fill="#888" /></svg>
        <svg width="5" height="8" viewBox="0 0 5 8" aria-hidden><path d="M0 0v8l5-4z" fill="#888" /></svg>
      </ScrollTrack>
    </Frame>
  </Page>
);

const Status = () => (
  <StatusBar>
    <StatusCell $w={16}><Ico s={15}><path d="M1 4l4 2 4-2 3-3 1 4 2 4-4 5-6 1-4-4 2-2z" fill="#d8642c" /><path d="M4 9l3 3 5-3-2 4-4 1z" fill="#fbeadd" /></Ico></StatusCell>
    <StatusCell>完成</StatusCell>
    <StatusCell $w={26}><Ico><circle cx="8" cy="8" r="6" fill="#5d8fcf" /><path d="M2 6c1-4 6-5 8-3-3 1-3 5-6 5z" fill="#7fc83c" /><path d="M13 8l1 5-5 2c3-2 2-4 4-7z" fill="#f0a030" /><path d="M5 9h6" stroke="#fff" strokeWidth="1.500" /></Ico></StatusCell>
    <StatusCell $w={13}><Ico s={10}><rect width="16" height="16" fill="#f2e06a" /><text x="4" y="13" fontSize="12" fontWeight="bold" fill="#665a10" fontFamily="Open Sans">P</text></Ico></StatusCell>
    <StatusCell $w={27}><Ico><rect width="16" height="16" rx="3" fill="#1aa0e6" /><circle cx="8" cy="8" r="2.500" fill="none" stroke="#fff" strokeWidth="1.400" /><path d="M10.500 5.500v4q2 1.500 2.500-1.500A5.200 5.200 0 1 0 10.500 12.500" fill="none" stroke="#fff" strokeWidth="1.400" /></Ico></StatusCell>
    <StatusCell $w={50} $top>PageRank</StatusCell>
    <StatusCell $w={51} $top>Alexa</StatusCell>
    <StatusCell $w={63}>NetBox</StatusCell>
    <StatusCell $w={72} $red>127.0.0.1</StatusCell>
    <StatusCell $w={28}><Ico><path d="M0 8l4-1 1-3 4 1 2-2h4l1 3-3 3-3 1-1 3-2-2-4 1-2 2z" fill="#555" /><circle cx="12" cy="5.500" r="1.800" fill="#bbb" /><path d="M6 6l3 2" stroke="#aaa" /></Ico></StatusCell>
    <StatusCell $w={16}><Grip /></StatusCell>
  </StatusBar>
);

const FileDialog = () => (
  <Dialog $modal role="dialog" aria-label="文件上载">
    <TitleBar $h={29}><h1>文件上载</h1><CaptionButton $close aria-label="关闭"><CloseX /></CaptionButton></TitleBar>
    <ExplorerBar>
      <svg width="65" height="28" viewBox="0 0 65 28" aria-hidden>
        <path d="M15 1h28a13 13 0 0 1 0 26H15a13 13 0 0 1 0-26z" fill="#a9c0dc" stroke="#8fa9c8" />
        {[15.5, 43.5].map(x => <circle key={x} cx={x} cy="14" r="12" fill="url(#glass)" stroke="#54677e" strokeWidth="1.300" />)}
        <path d="M8 14l7-6v4h7v4h-7v4zM51 14l-7-6v4h-7v4h7v4z" fill="#dce9f6" stroke="#9ab1cc" strokeWidth=".7" />
        <path d="M59.500 12h6l-3 4z" fill="#e8f1fa" stroke="#7d93ad" strokeWidth=".7" />
      </svg>
      <PathBox><Monitor />桌面<PathMark><svg width="5" height="8" viewBox="0 0 5 8" aria-hidden><path d="M0 0v8l5-4z" fill="#000" /></svg></PathMark><Grow /><Caret />
        <PathSplit><Ico><path d="M1 6l4-5v3h3v3H7l-1-1H5v3z" fill="#2f86d6" /><path d="M15 9l-4 6v-3H8V9h1l1 1h1V6z" fill="#2468b8" /></Ico></PathSplit>
      </PathBox>
      <PathBox $w={203}><input aria-label="搜索" placeholder="搜索 桌面" /><Magnifier /></PathBox>
    </ExplorerBar>
    <CommandBar>
      <FlatButton>组织 <Caret c="#1e395b" /></FlatButton>
      <FlatButton>新建文件夹</FlatButton>
      <Grow />
      <ViewTools>
        <FlatButton aria-label="视图"><Ico><path d="M.5.500h7v6h-7zM.5 9.500h7v6h-7z" fill="#fff" stroke="#8796ad" /><path d="M2 3h4v2H2zM2 11h4v3H2z" fill="#3b9a6a" /><path d="M10 2.500h6M10 5.500h4M10 11.500h6M10 14.500h4" stroke="#5b6f8c" /></Ico><Caret c="#1e395b" /></FlatButton>
        <FlatButton aria-label="预览窗格"><Ico><rect x=".5" y="1.500" width="15" height="13" fill="#fff" stroke="#5b7da6" /><path d="M1 3h14" stroke="#9cc" strokeWidth="2" /><rect x="10" y="2" width="5" height="12" fill="#6fc2e2" stroke="#3c86ac" /></Ico></FlatButton>
        <FlatButton aria-label="帮助"><Ico><circle cx="8" cy="8" r="7.300" fill="#2244a8" stroke="#8a93a6" strokeWidth="1.400" /><text x="5" y="12.500" fontSize="12" fontWeight="bold" fill="#fff" fontFamily="Open Sans">?</text></Ico></FlatButton>
      </ViewTools>
    </CommandBar>
    <DialogBody>
      <Tree>{tree.map(([ic, t, child, gap]) => <TreeItem href="#" key={t} $child={child} $gap={gap}>{ic}{t}</TreeItem>)}</Tree>
      <ScrollTrack><CaretUp /><Thumb $top={7} $h={127}><ThumbLines /></Thumb><CaretDown /></ScrollTrack>
      <Files>
        {files.map(([ic, name, type, size]) => (
          <FileTile href="#" key={name} $on={name === 'bdlogo.gif'} $folder={!size}>{ic}<div><b>{name}</b><span>{type}</span>{size && <span>{size}</span>}</div></FileTile>
        ))}
      </Files>
      <ScrollTrack><CaretUp /><Thumb $top={73} $h={30}><ThumbLines /></Thumb><CaretDown /></ScrollTrack>
    </DialogBody>
    <DialogFooter onSubmit={e => e.preventDefault()}>
      <label htmlFor="fname">文件名(N):</label>
      <NameBox><input id="fname" defaultValue="bdlogo.gif" /><Caret /></NameBox>
      <ButtonSelect $w={187} $h={25}><select aria-label="文件类型"><option>所有文件</option></select><Caret /></ButtonSelect>
      <DialogActions><PageButton $w={86} $h={28} $hot>打开(O)</PageButton><PageButton $w={86} $h={28} type="button">取消</PageButton></DialogActions>
      <GripRow><Grip /></GripRow>
    </DialogFooter>
  </Dialog>
);

const RecorderPanel = () => (
  <Recorder>
    <RecorderTitle><h2>控制</h2><button aria-label="关闭"><svg width="7" height="7" viewBox="0 0 7 7" aria-hidden><path d="M1 1l5 5M6 1L1 6" stroke="#fff" strokeWidth="1.600" /></svg></button></RecorderTitle>
    <RecorderTools>
      {['M5 5h2v6H5zM9 5h2v6H9z', 'M5 5h6v6H5z', 'M4 5l4 3-4 3zM8 5l4 3-4 3z'].map((d, i) => (
        <ToolButton key={d} $w={22} $ml={i ? 1 : 0} aria-label={['暂停', '停止', '快进'][i]}><Ico><rect x=".5" y=".5" width="15" height="15" fill="#f4f4f4" stroke="#0ee" /><rect x="2" y="2" width="12" height="12" fill="none" stroke="#000" strokeWidth="1.300" /><path d={d} fill="#000" /></Ico></ToolButton>
      ))}
      <ToolButton $w={22} $ml={9} aria-label="窗口"><Ico><rect x=".5" y="1.500" width="15" height="13" fill="#fff" stroke="#000" /><path d="M1 3h14" stroke="#00f" strokeWidth="2" /><path d="M8 5v9M3 9.500h10M6 7l2-2 2 2M6 12l2 2 2-2M5 7.500l-2 2 2 2M11 7.500l2 2-2 2" fill="none" stroke="#000" /></Ico></ToolButton>
      <ToolButton $w={22} $ml={1} $down aria-label="全屏"><Ico><rect x="4.500" y="4.500" width="7" height="7" fill="#fff" stroke="#000" /><path d="M5 6h6" stroke="#00f" strokeWidth="2" /><path d="M1 5V1h4M11 1h4v4M15 11v4h-4M5 15H1v-4M1 1l3 3M15 1l-3 3M15 15l-3-3M1 15l3-3" fill="none" stroke="#000" strokeWidth="1.300" /></Ico></ToolButton>
      <ToolButton $w={35} $ml={17}>菜单</ToolButton>
      <ToolButton $w={35} $ml={8} disabled>多节</ToolButton>
      <ToolButton $w={35} $ml={16}>定位</ToolButton>
    </RecorderTools>
    <Track>
      <svg width="277" height="17" viewBox="0 0 277 17" aria-hidden>
        <rect x="1" y="4" width="274" height="5" fill="#00f" />
        {Array.from({ length: 26 }, (_, i) => <rect key={i} x={Math.round(i * 10.8)} y="10" width="2" height="4" fill="#f00" />)}
        <rect x="71" width="2" height="15" fill="#f00" />
      </svg>
    </Track>
    <RecorderStatus>帧:1187/4560 时间:6:35/25:18
      <svg width="56" height="12" viewBox="0 0 56 12" aria-hidden><path d="M1 3.500h2.500l4-3v11l-4-3H1z" fill="none" stroke="#00b000" strokeWidth="1.200" /><rect x="11.500" y="3.500" width="43" height="4" fill="#fff" stroke="#00b000" /><rect x="9" y="1" width="4" height="9" fill="#008000" /></svg>
    </RecorderStatus>
  </Recorder>
);

export default function App() {
  return (
    <Screen>
      <Global />
      <Defs />
      <IconColumns>
        {desktop.map((col, c) => (
          <IconColumn key={c}>
            {col.map((it, r) => it && (
              <Shortcut href="#" key={r}>{it[0] ?? <Box>{null}</Box>}<div>{it[1].map(l => <span key={l}>{l}</span>)}</div></Shortcut>
            ))}
          </IconColumn>
        ))}
      </IconColumns>
      <Taskbar><Clock>19:15</Clock><ShowDesktop aria-label="显示桌面" /></Taskbar>
      <TopStrip><i /><i /><i /></TopStrip>
      <Browser>
        <TitleBar $h={28}><Firefox /><h1>良精通用企业网站管理系统 - Mozilla Firefox</h1>
          <CaptionButton aria-label="最小化"><svg width="11" height="9" viewBox="0 0 11 9" aria-hidden><rect x=".5" y="4.500" width="10" height="3.500" fill="#fff" stroke="#44546a" /></svg></CaptionButton>
          <CaptionButton aria-label="还原"><svg width="11" height="9" viewBox="0 0 11 9" aria-hidden><rect x=".5" y=".5" width="10" height="8" fill="#fff" stroke="#44546a" /><rect x="3.500" y="3.500" width="4" height="2" fill="#9fb8d6" stroke="#44546a" /></svg></CaptionButton>
          <CaptionButton $close aria-label="关闭"><CloseX /></CaptionButton>
        </TitleBar>
        <BrowserChrome />
        <TabBar><Tab href="#"><PageIco />良精通用企业网站管理系统</Tab><TabList aria-label="标签列表"><Caret c="#777" s={7} /></TabList></TabBar>
        <FormPage />
        <Status />
      </Browser>
      <FileDialog />
      <RecorderPanel />
      <Watermark><b>龙天技术论坛</b>:wWw.LtHack.Com</Watermark>
      <ScreenTimer>6:35/25:18</ScreenTimer>
      <Pointer>
        <svg width="34" height="36" viewBox="0 0 34 36" aria-hidden><circle cx="15" cy="15" r="14" fill="none" stroke="#f00" strokeWidth="2" /><path d="M15.500 15.500v15l3.500-3 3 6 3-1.500-3-6h4.500z" fill="#fff" stroke="#000" /></svg>
      </Pointer>
    </Screen>
  );
}
